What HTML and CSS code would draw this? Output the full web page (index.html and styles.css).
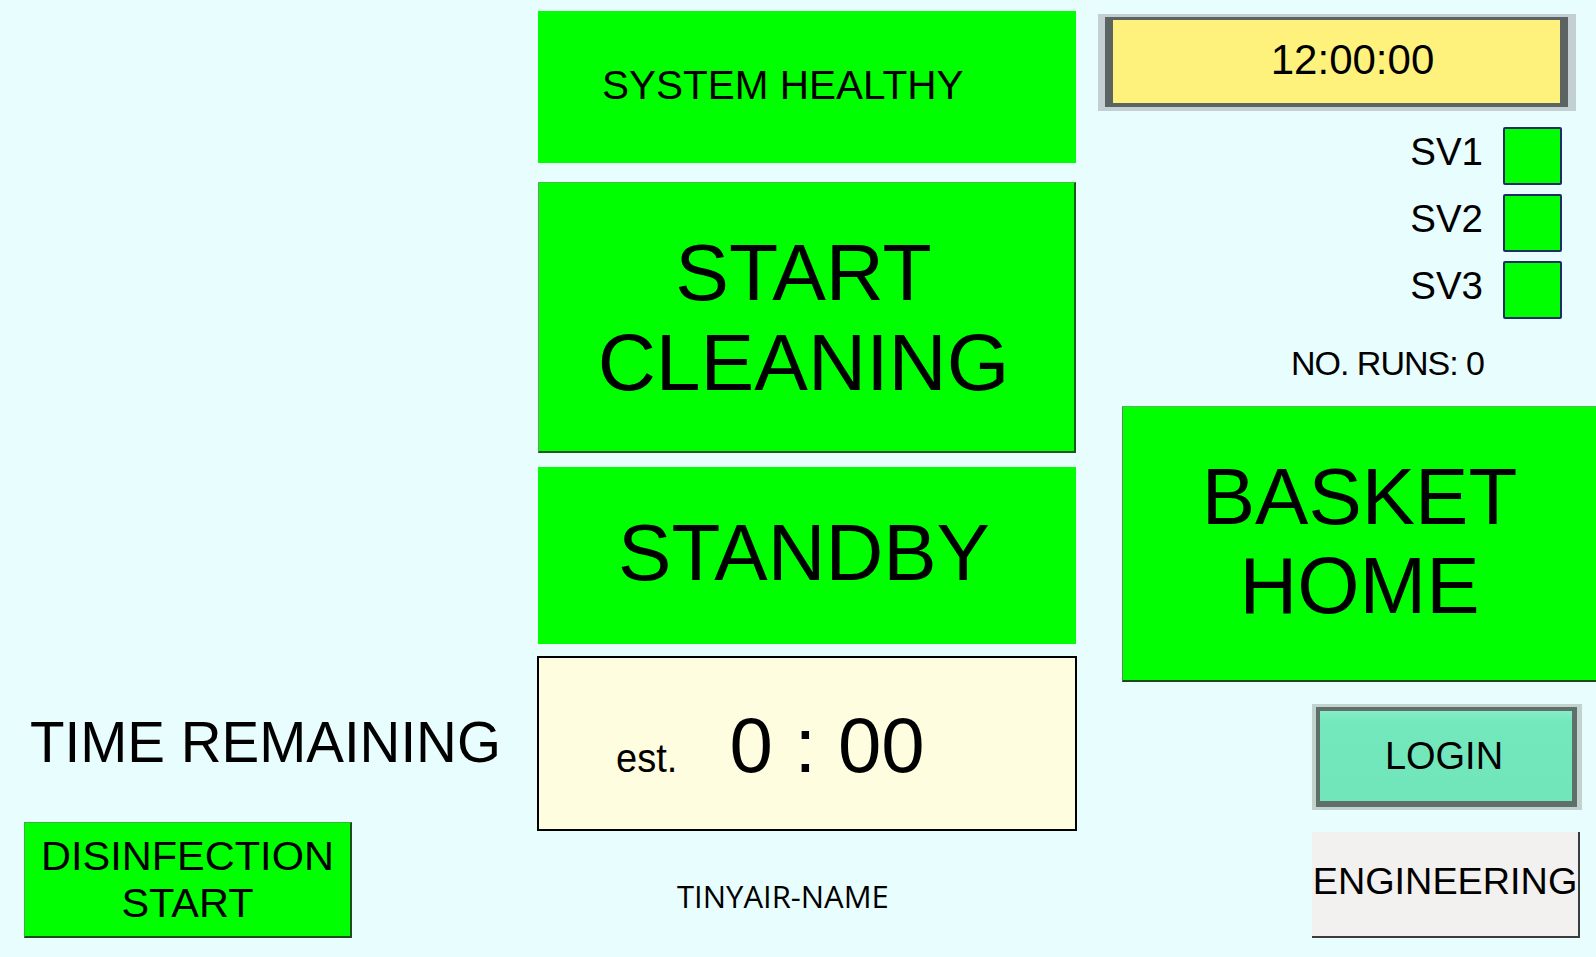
FILE: index.html
```html
<!DOCTYPE html>
<html>
<head>
<meta charset="utf-8">
<title>TinyAir HMI</title>
<link rel="stylesheet" href="styles.css">
</head>
<body>
<div class="screen">
  <div class="col col-left">
    <div class="time-label">TIME REMAINING</div>
    <div class="btn disinfect">DISINFECTION<br>START</div>
  </div>
  <div class="col col-center">
    <div class="status">SYSTEM HEALTHY</div>
    <div class="btn big start">START<br>CLEANING</div>
    <div class="btn big standby">STANDBY</div>
    <div class="timer"><span class="est">est.</span><span class="time">0 : 00</span></div>
    <div class="name">TINYAIR-NAME</div>
  </div>
  <div class="col col-right">
    <div class="clock-frame"><div class="clock">12:00:00</div></div>
    <div class="valves">
      <div class="valve"><span class="valve-label">SV1</span><span class="led"></span></div>
      <div class="valve"><span class="valve-label">SV2</span><span class="led"></span></div>
      <div class="valve"><span class="valve-label">SV3</span><span class="led"></span></div>
    </div>
    <div class="runs">NO. RUNS: 0</div>
    <div class="btn basket">BASKET<br>HOME</div>
    <div class="login-frame"><div class="login">LOGIN</div></div>
    <div class="eng">ENGINEERING</div>
  </div>
</div>
</body>
</html>
```

FILE: styles.css
```css
html, body {
  margin: 0;
  padding: 0;
  background: #e8fdfd;
}

.screen {
  display: flex;
  width: 1596px;
  height: 957px;
  overflow: hidden;
  background: #e8fdfd;
  font-family: "Liberation Sans", Arial, sans-serif;
  color: #000;
}

.col {
  display: flex;
  flex-direction: column;
  box-sizing: border-box;
}

/* ---------- left column ---------- */
.col-left {
  width: 538px;
  padding-top: 700px;
}

.time-label {
  margin-left: 30px;
  font-size: 56.5px;
  line-height: 85px;
  white-space: nowrap;
}

.btn {
  display: flex;
  align-items: center;
  justify-content: center;
  text-align: center;
  background: #00ff00;
  box-sizing: border-box;
}

.disinfect {
  margin-top: 37px;
  margin-left: 24px;
  width: 328px;
  height: 116px;
  font-size: 41.5px;
  line-height: 47px;
  padding-bottom: 2px;
  border-top: 1px solid #3fae3f;
  border-left: 1px solid #3fae3f;
  border-right: 2px solid #1d4f1d;
  border-bottom: 2px solid #1d4f1d;
}

/* ---------- center column ---------- */
.col-center {
  width: 538px;
  padding-top: 11px;
}

.status {
  height: 152px;
  background: #00ff00;
  display: flex;
  align-items: center;
  padding-left: 64px;
  padding-bottom: 4px;
  box-sizing: border-box;
  font-size: 40.5px;
  white-space: nowrap;
}

.big {
  font-size: 80px;
  line-height: 90px;
}

.start {
  margin-top: 19px;
  height: 271px;
  padding-right: 6px;
  font-size: 80.5px;
  border-top: 1px solid #3cc23c;
  border-left: 1px solid #6a9a6a;
  border-right: 2px solid #1c5a1c;
  border-bottom: 2px solid #1c5a1c;
}

.standby {
  margin-top: 14px;
  height: 177px;
  font-size: 80px;
  padding-bottom: 6px;
  padding-right: 6px;
}

.timer {
  margin: 12px -1px 0 -1px;
  height: 175px;
  box-sizing: border-box;
  border: 2px solid #000;
  background: #fffde0;
  display: flex;
  align-items: baseline;
  padding-top: 47px;
  padding-left: 77px;
}

.est {
  display: inline-block;
  font-size: 40px;
  transform: scaleX(0.95);
  transform-origin: left center;
  margin-right: 49px;
}

.time {
  font-size: 78px;
  line-height: 80px;
  white-space: pre;
}

.name {
  margin-top: 45px;
  padding-left: 139px;
  font-family: "Open Sans", "Noto Sans", sans-serif;
  font-size: 31px;
  line-height: 40px;
  white-space: nowrap;
}

/* ---------- right column ---------- */
.col-right {
  width: 520px;
  padding-top: 14px;
}

.clock-frame {
  margin-left: 22px;
  width: 478px;
  box-sizing: border-box;
  padding: 3px 8px 4px 7px;
  background: #c3cfd2;
}

.clock {
  height: 90px;
  box-sizing: border-box;
  border-style: solid;
  border-color: #5c6363;
  border-width: 3px 8px 4px 8px;
  background: #fff27c;
  text-align: center;
  padding-left: 32px;
  padding-bottom: 4px;
  font-size: 42px;
  line-height: 80px;
}

.valves {
  margin-top: 16px;
  display: flex;
  flex-direction: column;
  gap: 9px;
  padding-right: 34px;
}

.valve {
  display: flex;
  justify-content: flex-end;
  align-items: center;
}

.valve-label {
  font-size: 38.5px;
  line-height: 42px;
  padding-bottom: 8px;
  margin-right: 20px;
}

.led {
  width: 59px;
  height: 58px;
  box-sizing: border-box;
  background: #00ff00;
  border: 2px solid #1b2f66;
  border-radius: 2px;
}

.runs {
  margin-top: 24px;
  padding-right: 112px;
  text-align: right;
  font-size: 34px;
  line-height: 40px;
  letter-spacing: -1px;
  white-space: nowrap;
}

.basket {
  margin-top: 23px;
  margin-left: 46px;
  height: 276px;
  font-size: 80px;
  line-height: 89px;
  padding-bottom: 5px;
  border-top: 1px solid #5ab45a;
  border-left: 1px solid #5a8a5a;
  border-bottom: 2px solid #1d4a1d;
}

.login-frame {
  margin-top: 22px;
  margin-left: 236px;
  width: 270px;
  height: 106px;
  box-sizing: border-box;
  padding: 3px 5px 3px 4px;
  background: #c2d2cf;
}

.login {
  height: 100%;
  box-sizing: border-box;
  border-style: solid;
  border-color: #5f6f69;
  border-width: 4px 5px 6px 4px;
  background: linear-gradient(#86ecc8 0%, #74e8bd 12%, #72e6bb 100%);
  display: flex;
  align-items: center;
  justify-content: center;
  font-size: 38px;
  padding-right: 4px;
}

.eng {
  margin-top: 22px;
  margin-left: 236px;
  width: 268px;
  height: 106px;
  box-sizing: border-box;
  background: #f3f0f0;
  border-right: 2px solid #3c3c3c;
  border-bottom: 2px solid #3c3c3c;
  display: flex;
  align-items: center;
  justify-content: center;
  font-size: 37.8px;
  white-space: nowrap;
  padding-bottom: 6px;
}
```
